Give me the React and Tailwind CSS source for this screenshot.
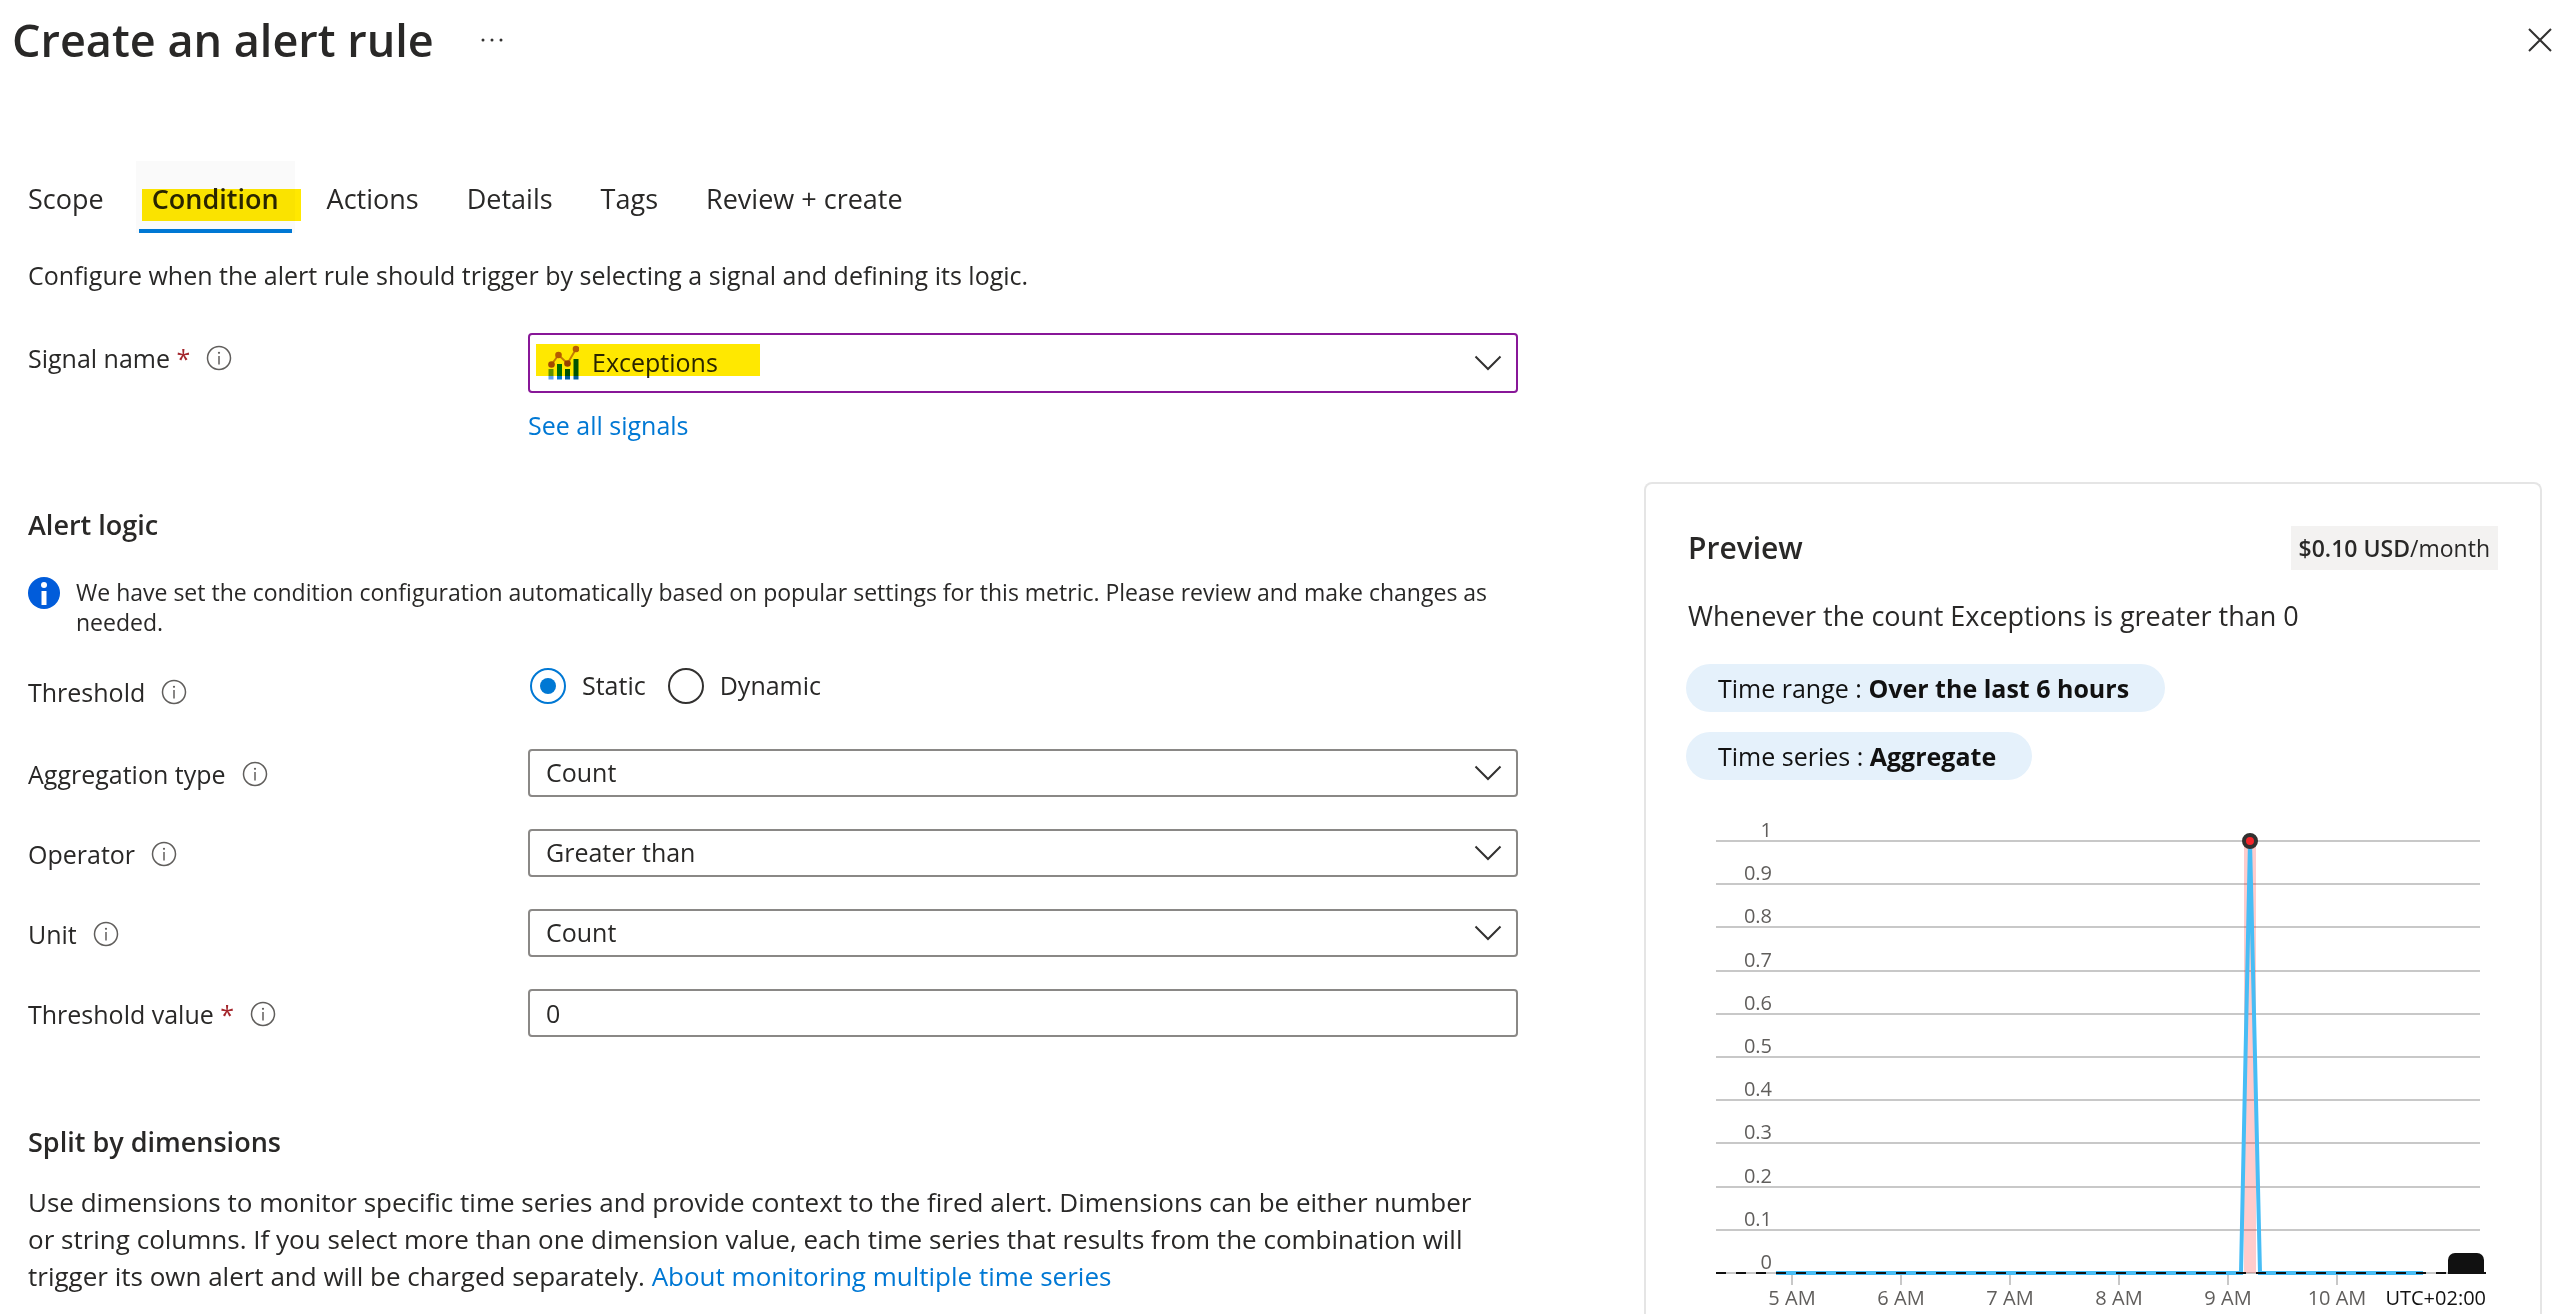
import { useState } from "react";

const tabs = ["Scope", "Condition", "Actions", "Details", "Tags", "Review + create"];

const hours = ["5 AM", "6 AM", "7 AM", "8 AM", "9 AM", "10 AM"];

const gridValues = ["1", "0.9", "0.8", "0.7", "0.6", "0.5", "0.4", "0.3", "0.2", "0.1", "0"];

const InfoButton = ({ label }) => (
  <button type="button" aria-label={`About ${label}`} className="text-[#605e5c]">
    <svg viewBox="0 0 26 26" className="w-[26px] h-[26px]" fill="none">
      <circle cx="13" cy="13" r="11.5" stroke="currentColor" strokeWidth="1.5" />
      <path d="M13 11v8.5" stroke="currentColor" strokeWidth="1.5" />
      <circle cx="13" cy="7.8" r="1.1" fill="currentColor" />
    </svg>
  </button>
);

const Chevron = () => (
  <svg
    viewBox="0 0 28 16"
    className="absolute right-4 top-1/2 -translate-y-1/2 w-7 h-4 pointer-events-none"
    fill="none"
    stroke="#323130"
    strokeWidth="2"
  >
    <path d="M1.5 1.5 14 14 26.5 1.5" />
  </svg>
);

const MetricIcon = () => (
  <svg viewBox="0 0 31 35" className="absolute left-5 top-3 w-[31px] h-[35px] pointer-events-none">
    <path d="M0.500 24h5v10.500h-5z" fill="#5ea0ef" />
    <path d="M9 19h5v15.500h-5z" fill="#0078d4" />
    <path d="M17 24h5v10.500h-5z" fill="#005ba1" />
    <path d="M25.500 14h5v20.500h-5z" fill="#005ba1" />
    <path d="M3.500 19.500 10.500 10 19.500 18.500 28 4" fill="none" stroke="#c3884a" strokeWidth="2" />
    <circle cx="3.500" cy="19.500" r="3.300" fill="#a3521b" />
    <circle cx="10.500" cy="10" r="3.300" fill="#b5651d" />
    <circle cx="19.500" cy="18.500" r="3.300" fill="#964614" />
    <circle cx="28" cy="4" r="3.300" fill="#b5651d" />
  </svg>
);

const Field = ({ id, label, required, children }) => (
  <div className="flex items-start">
    <div className="w-[500px] shrink-0 pt-[7px] flex items-center gap-4">
      <label htmlFor={id} className="leading-9">
        {label}
        {required && <span className="text-[#a4262c]"> *</span>}
      </label>
      <InfoButton label={label} />
    </div>
    <div className="flex-1 min-w-0">{children}</div>
  </div>
);

const Select = ({ id, options }) => (
  <div className="relative">
    <select
      id={id}
      className="appearance-none block w-full h-12 pl-4 pr-14 bg-white border-2 border-[#8a8886] rounded-sm"
    >
      {options.map((option) => (
        <option key={option}>{option}</option>
      ))}
    </select>
    <Chevron />
  </div>
);

const Radio = ({ id, label, checked, onChange }) => (
  <label htmlFor={id} className="flex items-center gap-4">
    <input
      id={id}
      type="radio"
      name="threshold"
      checked={checked}
      onChange={onChange}
      className="appearance-none grid place-items-center w-9 h-9 rounded-full border-2 border-[#323130] checked:border-[#0078d4] before:w-4 before:h-4 before:rounded-full checked:before:bg-[#0078d4]"
    />
    {label}
  </label>
);

const Chart = () => (
  <svg viewBox="0 0 810 512" className="block w-full h-auto mt-5" fontSize="20">
    {gridValues.map((value, i) => {
      const y = 41 + Math.round(i * 43.2);
      return (
        <g key={value}>
          {i < 10 && <path d={`M28 ${y}H792`} stroke="#c8c8c8" strokeWidth="2" />}
          <text x="84" y={y - 4} textAnchor="end" fill="#605e5c">
            {value}
          </text>
        </g>
      );
    })}
    {hours.map((hour, i) => (
      <g key={hour}>
        <path d={`M${104 + i * 109} 475v10`} stroke="#c8c8c8" strokeWidth="2" />
        <text x={104 + i * 109} y="505" textAnchor="middle" fill="#605e5c">
          {hour}
        </text>
      </g>
    ))}
    <text x="798" y="505" textAnchor="end" fill="#111111">
      UTC+02:00
    </text>
    <path d="M28 473H798" stroke="#c8c8c8" strokeWidth="2" />
    <path d="M556 41h12v432h-12z" fill="#ff0000" fillOpacity="0.2" />
    <path d="M88 473H553L562 41 572 473H735" fill="none" stroke="#47bdf5" strokeWidth="4" />
    <path d="M760 474v-14a7 7 0 0 1 7-7h22a7 7 0 0 1 7 7v14z" fill="#111111" />
    <path d="M28 473H798" stroke="#111111" strokeWidth="2" strokeDasharray="10 10" />
    <circle cx="562" cy="41" r="6" fill="#f5252b" stroke="#323130" strokeWidth="4" />
  </svg>
);

const Preview = () => (
  <aside className="mt-[249px] px-[42px] pt-[42px] pb-0.5 border-2 border-b-0 border-[#e5e5e5] rounded-t-lg">
    <div className="flex items-center justify-between">
      <h2 className="text-[30px] leading-[44px] font-semibold">Preview</h2>
      <div className="bg-[#f3f2f1] px-2 text-[23px] leading-[44px]">
        <span className="font-semibold">$0.10 USD</span>/month
      </div>
    </div>
    <p className="mt-7 text-[27px] leading-9">Whenever the count Exceptions is greater than 0</p>
    <div className="mt-[30px] -ml-0.5 flex flex-col items-start gap-5 leading-[48px] text-[#111111]">
      <div className="bg-[#e5f1fb] rounded-full pl-8 pr-9">
        Time range : <b>Over the last 6 hours</b>
      </div>
      <div className="bg-[#e5f1fb] rounded-full pl-8 pr-9">
        Time series : <b>Aggregate</b>
      </div>
    </div>
    <Chart />
  </aside>
);

const App = () => {
  const [threshold, setThreshold] = useState("static");
  const [value, setValue] = useState("0");

  return (
    <div className="min-h-screen bg-white font-['Open_Sans',sans-serif] text-[25px] text-[#292827]">
      <header className="flex items-center pt-2 pl-3 pr-3.5">
        <h1 className="text-[45px] leading-[64px] font-semibold">Create an alert rule</h1>
        <button type="button" aria-label="More" className="ml-[46px]">
          <svg viewBox="0 0 24 6" className="w-6 h-1.5" fill="#323130">
            <circle cx="3" cy="3" r="1.5" />
            <circle cx="12" cy="3" r="1.5" />
            <circle cx="21" cy="3" r="1.5" />
          </svg>
        </button>
        <button type="button" aria-label="Close" className="ml-auto">
          <svg viewBox="0 0 24 24" className="w-6 h-6" stroke="#323130" strokeWidth="2">
            <path d="M1 1 23 23M23 1 1 23" />
          </svg>
        </button>
      </header>

      <nav className="flex gap-4 mt-[89px] pl-3 text-[27px] leading-9">
        {tabs.map((tab) =>
          tab === "Condition" ? (
            <button
              key={tab}
              type="button"
              className="relative px-4 pt-5 pb-4 bg-[#fafafa] font-semibold after:absolute after:bottom-0 after:inset-x-[3px] after:h-1 after:bg-[#0078d4]"
            >
              {tab}
              <span className="absolute left-1.5 top-7 w-full h-8 bg-[#ffe800] mix-blend-multiply" />
            </button>
          ) : (
            <button key={tab} type="button" className="px-4 pt-5 pb-4">
              {tab}
            </button>
          )
        )}
      </nav>

      <main className="grid grid-cols-[1490fr_898fr] gap-[126px] pl-7 pr-6">
        <form className="min-w-0">
          <p className="mt-6 mb-10 leading-9">
            Configure when the alert rule should trigger by selecting a signal and defining its logic.
          </p>

          <Field id="signal" label="Signal name" required>
            <div className="relative isolate">
              <select
                id="signal"
                className="appearance-none block w-full h-[60px] pl-[62px] pr-14 bg-white border-2 border-[#881798] rounded-sm"
              >
                <option>Exceptions</option>
              </select>
              <MetricIcon />
              <span className="absolute left-2 top-[11px] w-56 h-8 bg-[#ffe800] mix-blend-multiply pointer-events-none" />
              <Chevron />
            </div>
            <a href="#signals" className="block w-fit mt-3.5 leading-9 text-[#0078d4]">
              See all signals
            </a>
          </Field>

          <h2 className="mt-16 text-[27px] leading-9 font-semibold">Alert logic</h2>
          <div className="mt-[34px] mb-[30px] flex items-start gap-4">
            <svg viewBox="0 0 32 32" className="w-8 h-8 shrink-0">
              <circle cx="16" cy="16" r="16" fill="#015cda" />
              <circle cx="16" cy="8" r="3" fill="#fff" />
              <path d="M13.500 14h5v14h-5z" fill="#fff" />
            </svg>
            <p className="text-[23px] leading-[30px]">
              We have set the condition configuration automatically based on popular settings for this
              metric. Please review and make changes as needed.
            </p>
          </div>

          <div className="flex flex-col gap-8">
            <Field id="static" label="Threshold">
              <div className="flex gap-[22px] h-[50px] pl-0.5 items-start">
                <Radio
                  id="static"
                  label="Static"
                  checked={threshold === "static"}
                  onChange={() => setThreshold("static")}
                />
                <Radio
                  id="dynamic"
                  label="Dynamic"
                  checked={threshold === "dynamic"}
                  onChange={() => setThreshold("dynamic")}
                />
              </div>
            </Field>
            <Field id="aggregation" label="Aggregation type">
              <Select id="aggregation" options={["Count"]} />
            </Field>
            <Field id="operator" label="Operator">
              <Select id="operator" options={["Greater than"]} />
            </Field>
            <Field id="unit" label="Unit">
              <Select id="unit" options={["Count"]} />
            </Field>
            <Field id="value" label="Threshold value" required>
              <input
                id="value"
                type="text"
                value={value}
                onChange={(e) => setValue(e.target.value)}
                className="block w-full h-12 px-4 border-2 border-[#8a8886] rounded-sm"
              />
            </Field>
          </div>

          <h2 className="mt-[87px] text-[27px] leading-9 font-semibold">Split by dimensions</h2>
          <p className="mt-6 pr-5 text-[26px] leading-[37px]">
            Use dimensions to monitor specific time series and provide context to the fired alert.
            Dimensions can be either number or string columns. If you select more than one dimension
            value, each time series that results from the combination will trigger its own alert and
            will be charged separately.{" "}
            <a href="#docs" className="text-[#0078d4]">
              About monitoring multiple time series
            </a>
          </p>
        </form>
        <Preview />
      </main>
    </div>
  );
};

export default App;
